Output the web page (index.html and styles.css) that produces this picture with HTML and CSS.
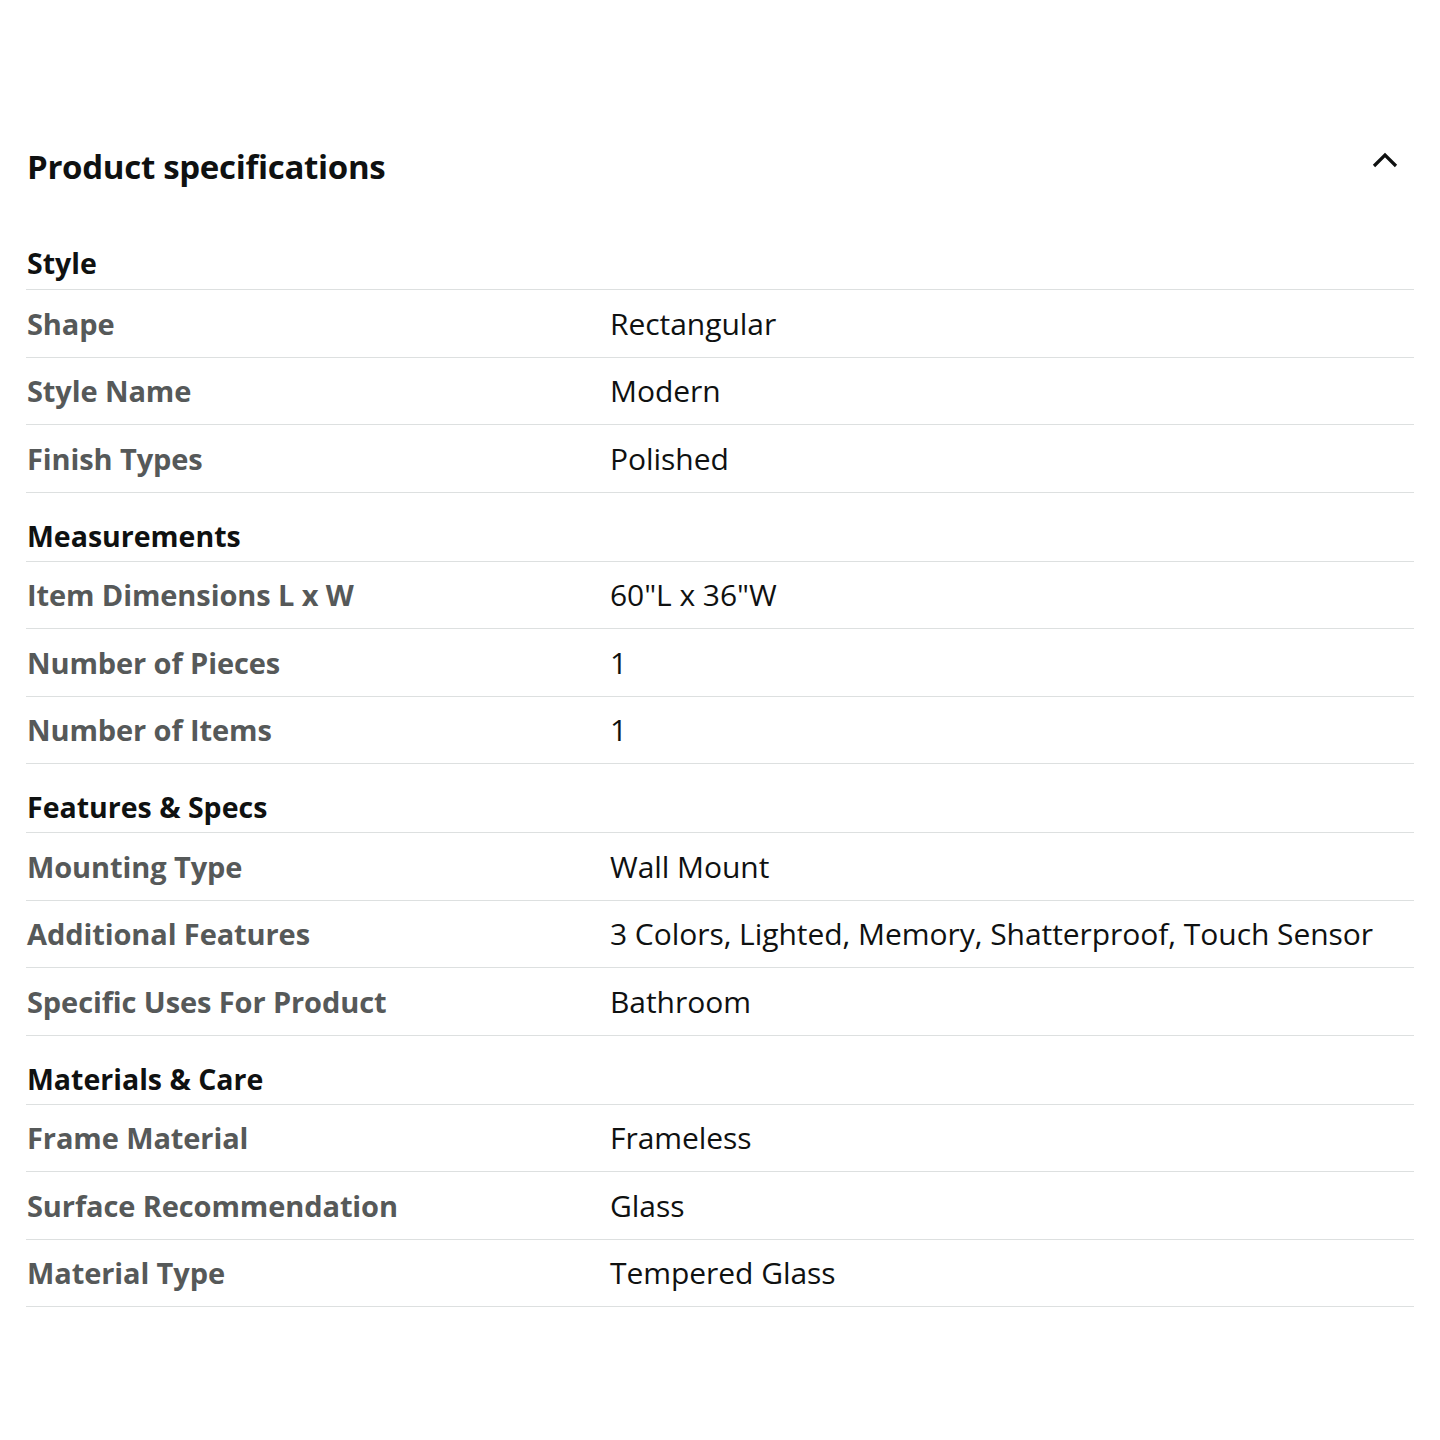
FILE: index.html
```html
<!DOCTYPE html>
<html>
<head>
<meta charset="utf-8">
<link rel="stylesheet" href="styles.css">
</head>
<body>
<div class="page">
  <div class="header">
    <h2 class="title">Product specifications</h2>
    <svg class="chevron" width="28" height="18" viewBox="0 0 28 18"><path d="M3 15 L14 4 L25 15" fill="none" stroke="#0F1111" stroke-width="3.2"/></svg>
  </div>
  <div class="table">
    <div class="row section"><span class="sec">Style</span></div>
    <div class="row"><span class="label">Shape</span><span class="value">Rectangular</span></div>
    <div class="row"><span class="label">Style Name</span><span class="value">Modern</span></div>
    <div class="row"><span class="label">Finish Types</span><span class="value">Polished</span></div>
    <div class="row section"><span class="sec">Measurements</span></div>
    <div class="row"><span class="label">Item Dimensions L x W</span><span class="value">60"L x 36"W</span></div>
    <div class="row"><span class="label">Number of Pieces</span><span class="value">1</span></div>
    <div class="row"><span class="label">Number of Items</span><span class="value">1</span></div>
    <div class="row section"><span class="sec">Features &amp; Specs</span></div>
    <div class="row"><span class="label">Mounting Type</span><span class="value">Wall Mount</span></div>
    <div class="row"><span class="label">Additional Features</span><span class="value">3 Colors, Lighted, Memory, Shatterproof, Touch Sensor</span></div>
    <div class="row"><span class="label">Specific Uses For Product</span><span class="value">Bathroom</span></div>
    <div class="row section"><span class="sec">Materials &amp; Care</span></div>
    <div class="row"><span class="label">Frame Material</span><span class="value">Frameless</span></div>
    <div class="row"><span class="label">Surface Recommendation</span><span class="value">Glass</span></div>
    <div class="row"><span class="label">Material Type</span><span class="value">Tempered Glass</span></div>
  </div>
</div>
</body>
</html>
```
FILE: styles.css
```css
html, body {
  margin: 0;
  padding: 0;
  background: #ffffff;
}
body {
  font-family: "Open Sans", "Noto Sans", sans-serif;
  color: #0F1111;
}
.page {
  padding: 136px 26px 0 26px;
}
.header {
  display: flex;
  justify-content: space-between;
  align-items: flex-start;
  height: 85px;
}
.title {
  margin: 0;
  padding-left: 1px;
  font-size: 33px;
  font-weight: 700;
  line-height: 62px;
  letter-spacing: -0.3px;
}
.chevron {
  margin-top: 15px;
  margin-right: 15px;
}
.table {
  display: flex;
  flex-direction: column;
}
.row {
  display: flex;
  align-items: center;
  height: 67.5px;
  box-sizing: border-box;
  border-bottom: 1px solid #DDE0E0;
}
.section {
  align-items: flex-end;
  padding-bottom: 5px;
  height: 69px;
}
.row:first-child {
  height: 69px;
  padding-bottom: 6px;
}
.sec {
  padding-left: 1px;
  font-size: 28.5px;
  font-weight: 700;
  color: #0F1111;
  line-height: 40px;
}
.label {
  width: 583px;
  flex: none;
  padding-left: 1px;
  font-size: 29px;
  font-weight: 700;
  color: #565959;
  letter-spacing: -0.1px;
}
.value {
  font-size: 30px;
  color: #0F1111;
  font-weight: 400;
  letter-spacing: -0.05px;
}
```
